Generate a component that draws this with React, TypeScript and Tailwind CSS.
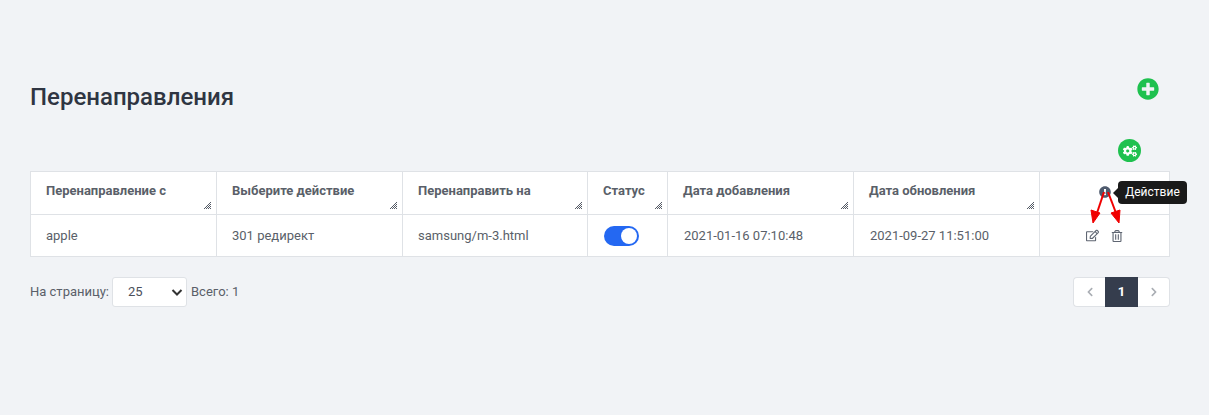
import React from 'react';
import { FaPlusCircle, FaCogs, FaExclamationCircle, FaRegEdit, FaRegTrashAlt, FaChevronLeft, FaChevronRight } from 'react-icons/fa';

const columns = [
  { title: 'Перенаправление с', width: 'w-[186px]' },
  { title: 'Выберите действие', width: 'w-[186px]' },
  { title: 'Перенаправить на', width: 'w-[185px]' },
  { title: 'Статус', width: 'w-[80px]' },
  { title: 'Дата добавления', width: 'w-[186px]' },
  { title: 'Дата обновления', width: 'w-[186px]' },
];

const ResizeGrip = () => (
  <svg className="absolute right-[4px] bottom-[4px]" width="9" height="9" viewBox="0 0 9 9" stroke="#555b66" strokeWidth="1">
    <path d="M1 8 L8 1 M3 8 L8 3 M5 8 L8 5 M7 8 L8 7" />
  </svg>
);

const App: React.FC = () => {
  return (
    <div className="w-[1209px] h-[415px] overflow-hidden bg-[#f1f3f6] pl-[30px] pr-[39px] pt-[78px] font-['Roboto',sans-serif]">
      {/* Title and add button */}
      <div className="flex justify-between h-[60px]">
        <h1 className="text-[24px] leading-[38px] font-medium text-[#2f3542]">Перенаправления</h1>
        <FaPlusCircle className="text-[22px] text-[#1fc14f] mr-[11px]" />
      </div>

      {/* Settings button */}
      <div className="flex justify-end h-[33px] pr-[29px]">
        <div className="w-[23px] h-[23px] mt-px rounded-full bg-[#1fc14f] flex items-center justify-center">
          <FaCogs className="text-[14px] text-white" />
        </div>
      </div>

      {/* Table */}
      <table className="w-[1140px] table-fixed border-collapse bg-white text-[13px] text-[#5a5f69]">
        <thead>
          <tr className="h-[43px]">
            {columns.map((col) => (
              <th key={col.title} className={`${col.width} relative border border-[#dfe2e6] pl-[15px] pb-[2px] text-left font-bold align-middle`}>
                <span className="relative top-[-1px]">{col.title}</span>
                <ResizeGrip />
              </th>
            ))}
            <th className="relative border border-[#dfe2e6]">
              <div className="flex justify-center pl-[1px]">
                <FaExclamationCircle className="text-[12px] text-[#4f5b6e] relative top-[-1px]" />
              </div>
              <div className="absolute left-[78px] top-[9px] z-10 h-[23px] w-[69px] rounded-[4px] bg-[#1a1a1a] text-center text-[12px] leading-[23px] font-normal text-white">
                Действие
                <span className="absolute left-[-5px] top-[7px] h-0 w-0 border-y-[5px] border-r-[5px] border-y-transparent border-r-[#1a1a1a]" />
              </div>
              {/* Red annotation arrows */}
              <svg className="absolute left-[40px] top-[20px] z-10" width="50" height="36" viewBox="0 0 50 36" fill="#f00000" stroke="#f00000">
                <path d="M24 0 L17 21" strokeWidth="2" />
                <path d="M28 0 L36 21" strokeWidth="2" />
                <path d="M11 18 L20 21 L13 31 Z" />
                <path d="M31 21 L40 18 L39 31 Z" />
              </svg>
            </th>
          </tr>
        </thead>
        <tbody>
          <tr className="h-[42px]">
            <td className="border border-[#dfe2e6] pl-[15px]">apple</td>
            <td className="border border-[#dfe2e6] pl-[15px]">301 редирект</td>
            <td className="border border-[#dfe2e6] pl-[15px]">samsung/m-3.html</td>
            <td className="border border-[#dfe2e6] pl-[16px]">
              <div className="w-[35px] h-[20px] rounded-full bg-[#2468f2] flex items-center justify-end pr-[2px]">
                <span className="w-[16px] h-[16px] rounded-full bg-white" />
              </div>
            </td>
            <td className="border border-[#dfe2e6] pl-[16px]">2021-01-16 07:10:48</td>
            <td className="border border-[#dfe2e6] pl-[16px]">2021-09-27 11:51:00</td>
            <td className="border border-[#dfe2e6]">
              <div className="flex items-center justify-center gap-[12px] text-[#5f6672]">
                <FaRegEdit className="text-[13px]" />
                <FaRegTrashAlt className="text-[12px]" />
              </div>
            </td>
          </tr>
        </tbody>
      </table>

      {/* Footer: page size and pagination */}
      <div className="mt-[20px] flex items-center justify-between text-[13px] text-[#5a5f69]">
        <div className="flex items-center">
          <span>На страницу:</span>
          <div className="ml-[3px] mr-[4px] w-[75px] h-[30px] rounded-[3px] border border-[#dfe2e6] bg-white flex items-center justify-between pl-[15px] pr-[2px] text-[#4b505a]">
            <span>25</span>
            <svg width="14" height="14" viewBox="0 0 14 14" fill="none" stroke="#333" strokeWidth="2">
              <path d="M2.5 5 L7 9.5 L11.5 5" />
            </svg>
          </div>
          <span>Всего: 1</span>
        </div>
        <div className="flex h-[30px] items-stretch mr-0">
          <div className="w-[32px] rounded-l-[4px] border border-[#dfe2e6] border-r-0 bg-white flex items-center justify-center text-[#a9adb3]">
            <FaChevronLeft className="text-[10px]" />
          </div>
          <div className="w-[33px] bg-[#353d4d] flex items-center justify-center text-[13px] font-bold text-white">1</div>
          <div className="w-[32px] rounded-r-[4px] border border-[#dfe2e6] border-l-0 bg-white flex items-center justify-center text-[#a9adb3]">
            <FaChevronRight className="text-[10px]" />
          </div>
        </div>
      </div>
    </div>
  );
};

export default App;
